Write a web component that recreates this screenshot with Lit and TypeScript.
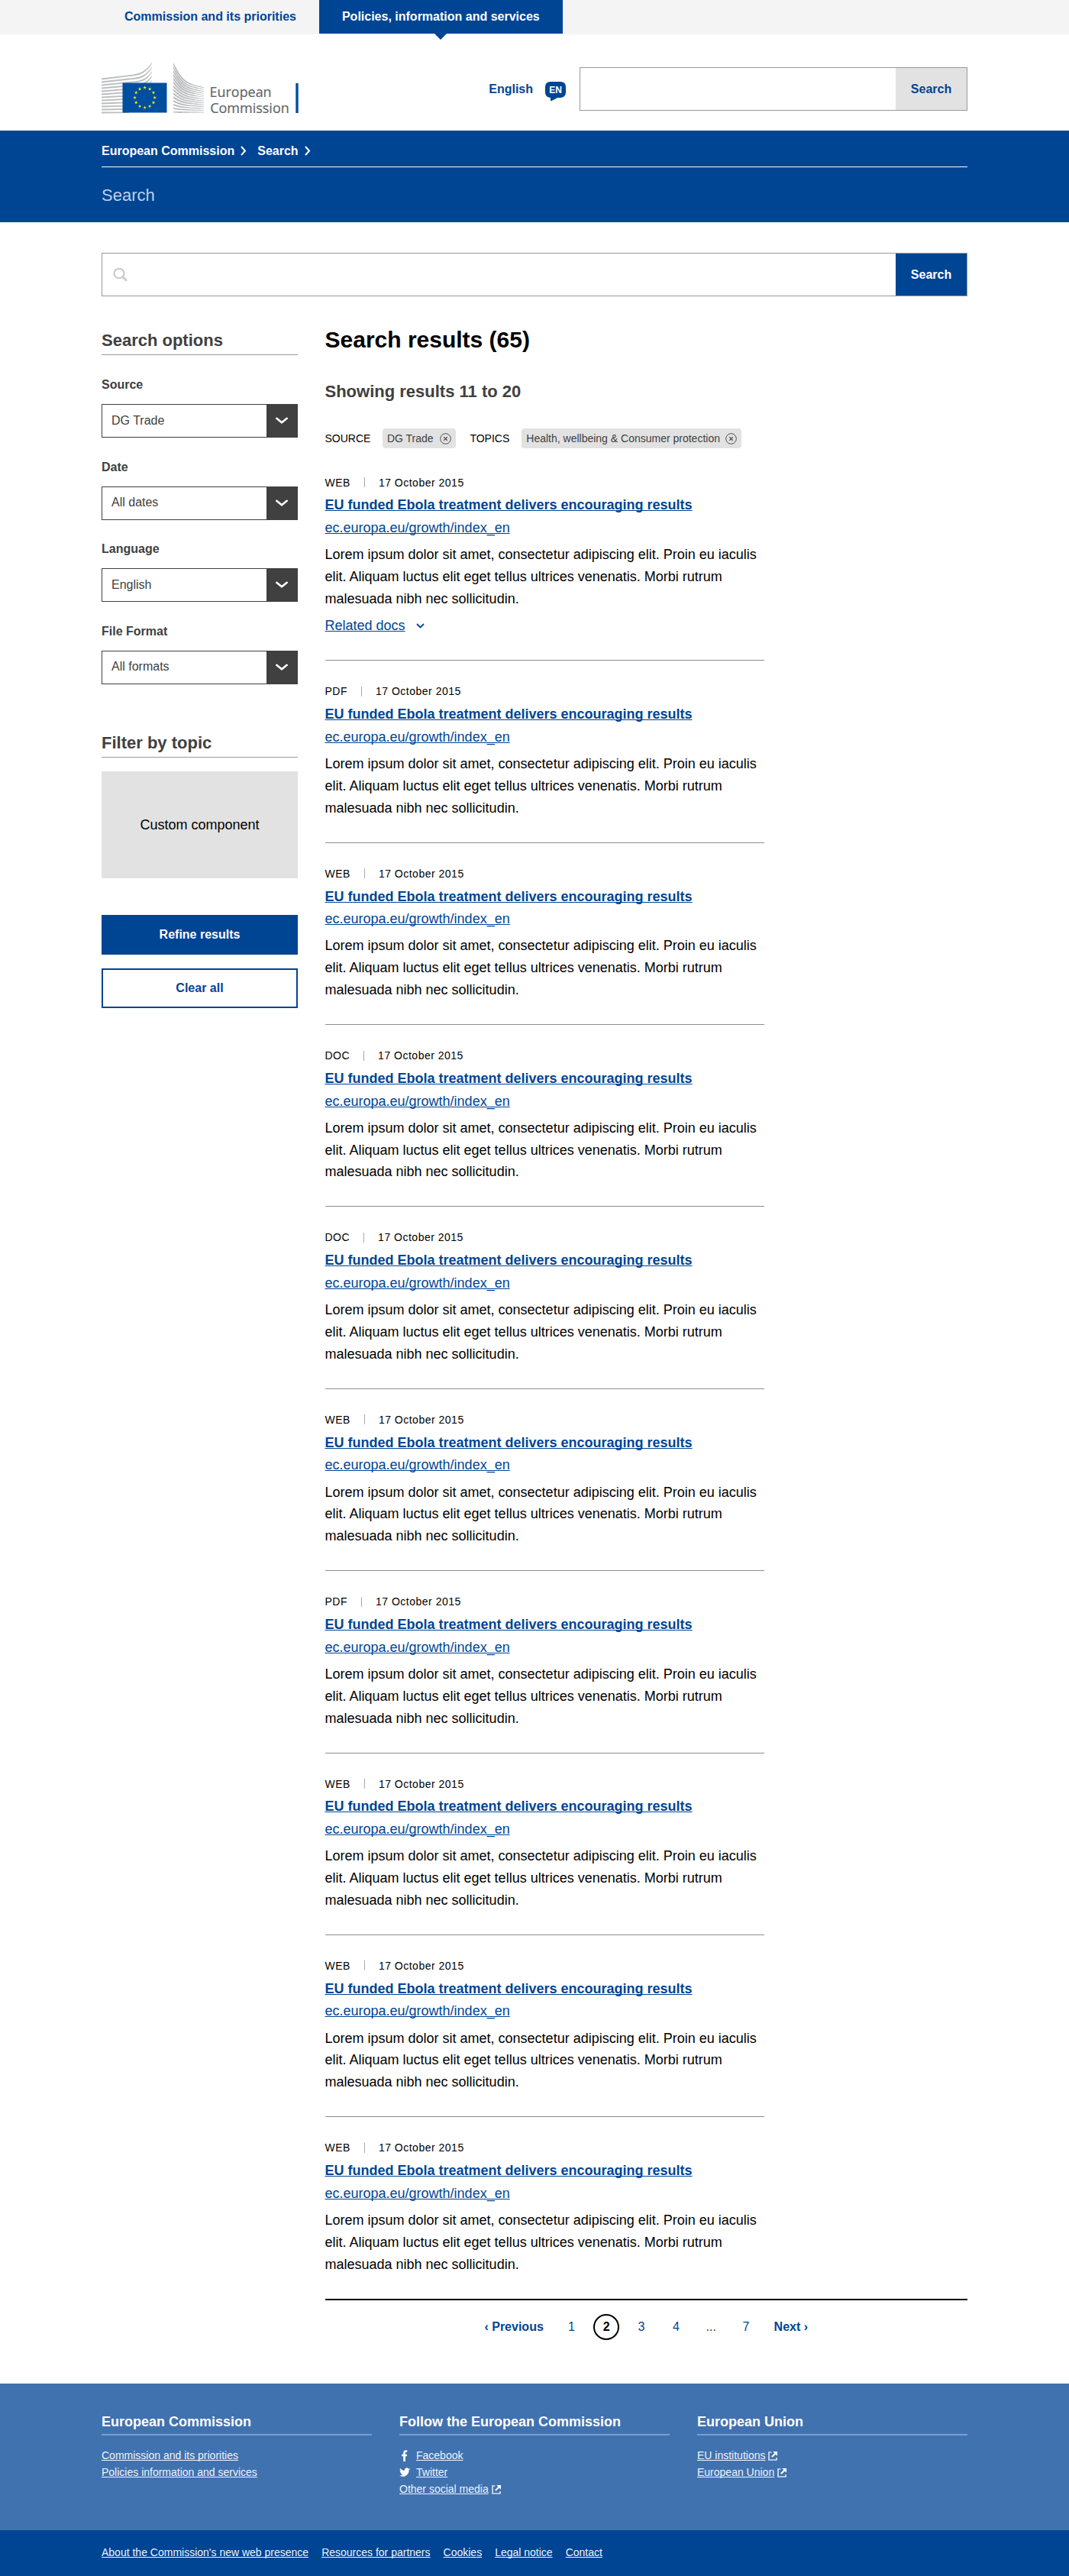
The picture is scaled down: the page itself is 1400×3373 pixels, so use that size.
import { LitElement, html, css, svg, nothing } from "lit";
import { customElement, property } from "lit/decorators.js";

const EXCERPT =
  "Lorem ipsum dolor sit amet, consectetur adipiscing elit. Proin eu iaculis elit. Aliquam luctus elit eget tellus ultrices venenatis. Morbi rutrum malesuada nibh nec sollicitudin.";

const RESULT_TYPES = ["WEB", "PDF", "WEB", "DOC", "DOC", "WEB", "PDF", "WEB", "WEB", "WEB"];

const FILTERS: [string, string][] = [
  ["Source", "DG Trade"],
  ["Date", "All dates"],
  ["Language", "English"],
  ["File Format", "All formats"],
];

const range = (n: number) => Array.from({ length: n }, (_, i) => i);

@customElement("ec-logo")
class EcLogo extends LitElement {
  static styles = css`
    :host { display: block; width: 260px; height: 74px; }
    svg { display: block; overflow: visible; }
    .name { font-family: "Open Sans", "Liberation Sans", sans-serif; font-weight: 500; font-size: 19px; fill: #626468; stroke: #626468; stroke-width: 0.2px; }
  `;

  private star(i: number) {
    const angle = (i * Math.PI) / 6;
    const cx = 56.6 + 13.1 * Math.sin(angle);
    const cy = 45.8 - 13.1 * Math.cos(angle);
    const points = range(10)
      .map((k) => {
        const r = k % 2 ? 0.95 : 2.4;
        const a = (k * Math.PI) / 5;
        return `${(cx + r * Math.sin(a)).toFixed(2)},${(cy - r * Math.cos(a)).toFixed(2)}`;
      })
      .join(" ");
    return svg`<polygon points=${points} fill="#ffed00"></polygon>`;
  }

  private leftLine(i: number) {
    const y = 20.4 + i * 4;
    const k = y - 4.2 * (1 - i / 11);
    const e = i * 5.7;
    const d = i < 5
      ? `M0 ${y}L36 ${k}C50 ${k - 1.2} 57 ${e + 12} 66 ${e}V${e + 1.3}C58 ${e + 13.6} 51 ${k + 1.1} 36 ${k + 1.8}L0 ${y + 2.2}Z`
      : `M0 ${y}L36 ${k}V${k + 1.7}L0 ${y + 2.2}Z`;
    return svg`<path d=${d} fill="#bbbdbf"></path>`;
  }

  private rightLine(i: number) {
    const y = i * 4.9;
    const e = 32.2 + i * 2.5;
    const k = e - 4.5 * (1 - i / 13);
    const m = y + (k - y) * 0.75;
    const t = 3.6 - i * 0.13;
    return svg`<path d=${`M94 ${y}C105 ${m} 108 ${k - 1} 134 ${e}V${e + 0.8}C107 ${k + 0.8} 104 ${m + 2} 94 ${y + t}Z`} fill="#bbbdbf"></path>`;
  }

  render() {
    return html`<svg width="260" height="74" viewBox="0 0 260 74">
      ${range(12).map((i) => this.leftLine(i))}
      ${range(14).map((i) => this.rightLine(i))}
      <rect x="27.5" y="26.5" width="58" height="39" fill="#004f9f"></rect>
      ${range(12).map((i) => this.star(i))}
      <text class="name" x="141.6" y="45.4" textLength="81" lengthAdjust="spacingAndGlyphs">European</text>
      <text class="name" x="142.2" y="65.6" textLength="103.6" lengthAdjust="spacingAndGlyphs">Commission</text>
      <rect x="254.3" y="27" width="3.4" height="39" fill="#004f9f"></rect>
    </svg>`;
  }
}

const shared = css`
  * { box-sizing: border-box; margin: 0; padding: 0; }
  svg { display: block; flex: none; }
  a { text-decoration: underline; text-decoration-skip-ink: none; }
`;

@customElement("search-result")
class SearchResult extends LitElement {
  @property() type = "WEB";
  @property({ type: Boolean }) related = false;
  @property({ type: Boolean, reflect: true }) last = false;

  static styles = [
    shared,
    css`
      :host { display: block; }
      .item { width: 575px; padding: 28px 0 30.2px; border-bottom: 1px solid #8e8e8e; font-size: 18px; line-height: 28.8px; }
      :host([last]) .item { border-bottom-color: transparent; }
      .meta { display: flex; align-items: center; height: 24px; font-size: 14px; line-height: 24px; letter-spacing: 0.5px; }
      .bar { width: 1px; height: 13px; background: #a8a8a8; margin: 0 18.3px 0 17.7px; }
      .link { display: block; width: fit-content; color: #004494; }
      .title { font-weight: 700; margin-top: 3.8px; }
      .url { margin-top: 1px; }
      .text { margin-top: 6.4px; }
      .related { display: flex; align-items: center; gap: 14px; margin: 6.6px 0 0.1px; }
    `,
  ];

  render() {
    return html`<article class="item">
      <div class="meta"><span>${this.type}</span><i class="bar"></i><span>17 October 2015</span></div>
      <a class="link title">EU funded Ebola treatment delivers encouraging results</a>
      <a class="link url">ec.europa.eu/growth/index_en</a>
      <p class="text">${EXCERPT}</p>
      ${this.related
        ? html`<div class="related">
            <a class="link">Related docs</a>
            <svg width="11" height="7" viewBox="0 0 11 7"><path d="M1 1L5.5 5.4L10 1" fill="none" stroke="#004494" stroke-width="1.8"/></svg>
          </div>`
        : nothing}
    </article>`;
  }
}

const crumbArrow = html`<svg width="8" height="13" viewBox="0 0 8 13"><path d="M1 1L6 6.5L1 12" fill="none" stroke="#fff" stroke-width="2"/></svg>`;
const selectArrow = html`<svg width="16" height="10" viewBox="0 0 16 10"><path d="M1.3 1.8L8 7.3L14.7 1.8" fill="none" stroke="#fff" stroke-width="2.6" stroke-linecap="round" stroke-linejoin="round"/></svg>`;
const removeIcon = html`<svg width="15" height="15" viewBox="0 0 15 15" fill="none" stroke="#404040"><circle cx="7.5" cy="7.5" r="6.8" stroke-width=".9"/><path d="M5.2 5.2L9.8 9.8M9.8 5.2L5.2 9.8" stroke-width="1.2"/></svg>`;
const externalIcon = html`<svg class="ext" width="12" height="12" viewBox="0 0 12 12" fill="none" stroke="#fff"><path d="M4.4 1H1V11H11V8" stroke-width="1.7" stroke="#d7e2f0"/><path d="M6.2 0H12V5.8Z" fill="#fff" stroke="none"/><path d="M9.6 2.4L4.9 7.1" stroke-width="2.1"/></svg>`;

@customElement("app-root")
class AppRoot extends LitElement {
  static styles = [
    shared,
    css`
      :host { display: block; width: 1400px; background: #fff; color: #000; font-family: "Liberation Sans", Arial, sans-serif; font-size: 16px; line-height: 24px; }
      .wrap { width: 1134px; margin: 0 auto; }
      .topbar { height: 45px; background: #f4f4f4; }
      .tabs { display: flex; height: 44px; }
      .tab { position: relative; padding: 9.5px 30px 0; font-weight: 700; color: #004494; }
      .tab.on { color: #fff; background: #004494; }
      .notch { position: absolute; left: 50%; top: 44px; margin-left: -8px; }
      .head { display: flex; height: 126px; padding-top: 37px; }
      .tools { display: flex; align-items: center; height: 57px; margin: 6px 0 0 auto; font-weight: 700; color: #004494; }
      .en { margin: 7px 18px 0 16px; }
      .entext { font: 700 12px "Liberation Sans", Arial, sans-serif; fill: #fff; }
      .box { display: flex; height: 57px; border: 1px solid #999; background: #fff; }
      .box.small { width: 508px; }
      .field { flex: 1; padding: 18px 0 0 14px; }
      .go { width: 93px; display: flex; align-items: center; justify-content: center; font-weight: 700; background: #e2e2e2; color: #004494; }
      .go.blue { background: #004494; color: #fff; }
      .band { height: 120px; background: #004494; color: #fff; }
      .crumbs { display: flex; align-items: center; height: 48px; padding-top: 6px; border-bottom: 1px solid #fff; font-weight: 700; }
      .crumb { display: flex; align-items: center; gap: 8px; margin-right: 14px; }
      .page { font-size: 22px; line-height: 30px; padding-top: 21.5px; color: #bfd0e4; }
      .main { padding-top: 40px; }
      .cols { display: grid; grid-template-columns: 257px 841.5px; gap: 35.5px; height: 2733px; align-items: start; }
      .side { color: #404040; }
      h2 { font-size: 22px; line-height: 30px; color: #404040; }
      .side h2 { height: 35px; line-height: 31px; border-bottom: 1px solid #999; }
      .side h2.first { margin-top: 42px; }
      .group { height: 107.6px; }
      .opts { padding-top: 25px; height: 492px; }
      .label { font-weight: 700; line-height: 27.4px; height: 39px; }
      .select { display: flex; height: 44px; border: 1px solid #404040; align-items: center; }
      .value { flex: 1; padding: 0 0 1px 12px; }
      .arrow { width: 40px; height: 42px; display: flex; align-items: center; justify-content: center; background: #404040; }
      .custom { margin: 18px 0 48px; height: 140px; background: #e2e2e2; color: #000; font-size: 18px; display: flex; align-items: center; justify-content: center; }
      .btn { height: 52px; display: flex; align-items: center; justify-content: center; font-weight: 700; border: 2px solid #004494; margin-bottom: 18px; }
      .btn.fill { background: #004494; color: #fff; }
      .btn.line { color: #004494; }
      h1 { font-size: 30px; line-height: 40px; margin-top: 37px; }
      .sub { margin-top: 32.5px; }
      .chips { display: flex; align-items: center; height: 26px; margin: 33.5px 0 4.5px; font-size: 14px; }
      .chip { display: flex; align-items: center; justify-content: space-between; height: 26px; padding: 0 6px; border-radius: 4px; background: #e2e2e2; color: #404040; white-space: nowrap; }
      .c1 { width: 96px; margin: 0 18.5px 0 15.5px; }
      .c2 { width: 288px; margin-left: 16px; }
      .pager { display: flex; justify-content: center; align-items: center; gap: 11.7px; border-top: 2px solid #000; padding-top: 18px; color: #004494; margin-top: -1px; }
      .num { width: 34px; height: 34px; display: flex; align-items: center; justify-content: center; }
      .cur { border: 2px solid #000; border-radius: 50%; color: #000; font-weight: 700; }
      .step { font-weight: 700; }
      .prev { margin-right: 8px; }
      .next { margin-left: 8px; }
      .dots { color: #333; }
      .foot { height: 192px; background: #4172b0; color: #fff; padding-top: 36px; }
      .fcols { display: grid; grid-template-columns: repeat(3, 354px); gap: 36px; }
      h3 { font-size: 18px; line-height: 28px; height: 32px; border-bottom: 2px solid #7d9dca; margin-bottom: 15px; }
      .frow { display: flex; align-items: center; height: 22px; font-size: 14px; line-height: 22px; color: #eef3f9; }
      .ext { margin: 1px 0 0 4px; }
      .soc { width: 22px; height: 15px; }
      .legal { height: 60px; background: #004494; }
      .links { display: flex; gap: 17px; padding-top: 18px; font-size: 14px; line-height: 22px; color: #eef3f9; }
    `,
  ];

  render() {
    return html`
      <div class="topbar"><div class="wrap tabs">
        <div class="tab">Commission and its priorities</div>
        <div class="tab on">Policies, information and services
          <svg class="notch" width="16" height="8" viewBox="0 0 16 8"><path d="M0 0H16L8 8Z" fill="#004494"/></svg>
        </div>
      </div></div>

      <header class="wrap head">
        <ec-logo></ec-logo>
        <div class="tools">
          <span>English</span>
          <svg class="en" width="27" height="26" viewBox="0 0 27 26"><path d="M7 0H20Q27 0 27 7V14Q27 20 20 21H16Q11 24 7 25.5V21Q0 20 0 14V7Q0 0 7 0Z" fill="#004494"/><text class="entext" x="13.5" y="14.7" text-anchor="middle">EN</text></svg>
          <div class="box small"><div class="field"></div><div class="go">Search</div></div>
        </div>
      </header>

      <div class="band"><div class="wrap">
        <nav class="crumbs">
          <span class="crumb">European Commission ${crumbArrow}</span>
          <span class="crumb">Search ${crumbArrow}</span>
        </nav>
        <div class="page">Search</div>
      </div></div>

      <main class="wrap main">
        <div class="box">
          <div class="field"><svg width="20" height="20" viewBox="0 0 20 20" fill="none" stroke="#ccc"><ellipse cx="8" cy="8" rx="6.5" ry="6.2" stroke-width="2.2"/><path d="M12.8 12.6L17 16.6" stroke-width="3" stroke-linecap="round"/></svg></div>
          <div class="go blue">Search</div>
        </div>
        <div class="cols">
          <aside class="side">
            <h2 class="first">Search options</h2>
            <div class="opts">
              ${FILTERS.map(([label, value]) => html`<div class="group">
                <div class="label">${label}</div>
                <div class="select"><span class="value">${value}</span><span class="arrow">${selectArrow}</span></div>
              </div>`)}
            </div>
            <h2>Filter by topic</h2>
            <div class="custom">Custom component</div>
            <div class="btn fill">Refine results</div>
            <div class="btn line">Clear all</div>
          </aside>
          <section>
            <h1>Search results (65)</h1>
            <h2 class="sub">Showing results 11 to 20</h2>
            <div class="chips">
              <span>SOURCE</span><span class="chip c1">DG Trade ${removeIcon}</span>
              <span>TOPICS</span><span class="chip c2">Health, wellbeing &amp; Consumer protection ${removeIcon}</span>
            </div>
            ${RESULT_TYPES.map((t, i) => html`<search-result type=${t} ?related=${i === 0} ?last=${i === RESULT_TYPES.length - 1}></search-result>`)}
            <nav class="pager">
              <span class="step prev">‹ Previous</span>
              <span class="num">1</span><span class="num cur">2</span><span class="num">3</span><span class="num">4</span><span class="num dots">...</span><span class="num">7</span>
              <span class="step next">Next ›</span>
            </nav>
          </section>
        </div>
      </main>

      <footer>
        <div class="foot"><div class="wrap fcols">
          <div>
            <h3>European Commission</h3>
            <div class="frow"><a>Commission and its priorities</a></div>
            <div class="frow"><a>Policies information and services</a></div>
          </div>
          <div>
            <h3>Follow the European Commission</h3>
            <div class="frow"><svg class="soc" viewBox="0 0 22 15"><path d="M5.2 15V8.2H3V5.7H5.2V3.9C5.2 1.5 6.6 .3 8.6 .3H10.2V2.7H9.1C8.2 2.7 7.9 3.2 7.9 4V5.7H10.1L9.8 8.2H7.9V15Z" fill="#fff"/></svg><a>Facebook</a></div>
            <div class="frow"><svg class="soc" viewBox="0 0 22 15"><g transform="scale(.6) translate(-.3 -.3)"><path d="M23.6 5c-.8.4-1.700.6-2.700.8 1-.6 1.700-1.500 2-2.600-.9.5-1.900.9-3 1.100A4.700 4.700 0 0 0 11.800 8.600C7.900 8.400 4.500 6.500 2.100 3.700c-1.200 2.200-.6 4.900 1.500 6.300-.8 0-1.500-.2-2.100-.6 0 2.200 1.500 4.200 3.800 4.700-.7.200-1.400.2-2.100.1.600 1.900 2.300 3.200 4.400 3.300A9.500 9.500 0 0 1 .6 19.400 13.400 13.400 0 0 0 21.200 7.400C22.200 6.800 23 6 23.600 5Z" fill="#fff"/></g></svg><a>Twitter</a></div>
            <div class="frow"><a>Other social media</a>${externalIcon}</div>
          </div>
          <div>
            <h3>European Union</h3>
            <div class="frow"><a>EU institutions</a>${externalIcon}</div>
            <div class="frow"><a>European Union</a>${externalIcon}</div>
          </div>
        </div></div>
        <div class="legal"><div class="wrap links">
          <a>About the Commission's new web presence</a><a>Resources for partners</a><a>Cookies</a><a>Legal notice</a><a>Contact</a>
        </div></div>
      </footer>
    `;
  }
}
